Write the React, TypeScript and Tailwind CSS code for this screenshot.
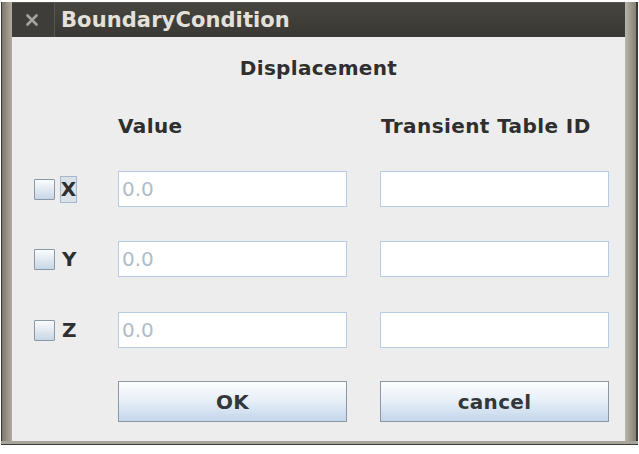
import React from "react";

// Displacement boundary condition dialog (Swing / GTK look)
const axes = [
  { name: "X", focused: true },
  { name: "Y", focused: false },
  { name: "Z", focused: false },
];

function CheckBox() {
  return (
    <span className="block h-[21px] w-[21px] rounded-[1px] border border-[#8a99aa] bg-gradient-to-b from-[#fbfcfd] to-[#c8d6e5]" />
  );
}

function Field({ value }: { value?: string }) {
  return (
    <div className="flex h-[36px] items-center border border-[#b5cce3] bg-white px-[3px] text-[20px] leading-none text-[#b0bcc9]">
      {value}
    </div>
  );
}

function Button({ label }: { label: string }) {
  return (
    <button className="flex h-[41px] items-center justify-center border border-[#8b97a4] bg-gradient-to-b from-[#fdfdfe] via-[#e6eef7] to-[#c3d6ea] text-[20px] font-bold tracking-[0.3px] text-[#34373a]">
      {label}
    </button>
  );
}

export default function App() {
  return (
    <div className="h-[454px] w-[639px] overflow-hidden bg-white font-['DejaVu_Sans',sans-serif]">
      <div className="ml-px mt-[2px] flex h-[443px] w-[637px] flex-col">
        <div className="flex flex-1">
          {/* left frame */}
          <div className="w-[11px] border-l border-[#3b3a36] bg-gradient-to-r from-[#7c766b] to-[#b2ada2]" />

          <div className="flex w-[613px] flex-col">
            {/* title bar */}
            <div className="flex h-[35px] items-center border-t border-[#55544f] bg-gradient-to-b from-[#46453f] to-[#393834]">
              <div className="flex h-full w-[43px] items-center justify-center border-r border-[#56554f] bg-[#3e3d39]">
                <svg width="12" height="12" viewBox="0 0 12 12" className="ml-[-2px]">
                  <path d="M1.5 1.5 L10.5 10.5 M10.5 1.5 L1.5 10.5" stroke="#a6a49f" strokeWidth="2.6" strokeLinecap="round" />
                </svg>
              </div>
              <span className="ml-[6px] text-[21px] font-bold leading-none tracking-[0.1px] text-[#e4e1da]">BoundaryCondition</span>
            </div>

            {/* dialog body */}
            <div className="flex-1 bg-[#ededed] pl-[22px] pt-[19px] text-[#2f2f2f]">
              <p className="pr-[22px] text-center text-[20px] font-bold leading-[24px] tracking-[0.3px]">Displacement</p>

              <div className="mt-[34px] grid grid-cols-[51px_229px_229px] gap-x-[33px] text-[20px] font-bold leading-[24px] tracking-[0.4px]">
                <span />
                <span>Value</span>
                <span className="pl-px">Transient Table ID</span>
              </div>

              {axes.map((a, i) => (
                <div
                  key={a.name}
                  className={
                    "grid grid-cols-[51px_229px_229px] items-center gap-x-[33px] " +
                    (i === 0 ? "mt-[33px]" : i === 1 ? "mt-[34px]" : "mt-[35px]")
                  }
                >
                  <div className="flex items-center gap-[5px]">
                    <CheckBox />
                    {a.focused ? (
                      <span className="flex h-[27px] w-[17px] items-center justify-center border border-[#a5b8cc] bg-[#d9e2eb] text-[20px] font-bold leading-none">
                        {a.name}
                      </span>
                    ) : (
                      <span className="pl-[2px] text-[20px] font-bold leading-none">{a.name}</span>
                    )}
                  </div>
                  <Field value="0.0" />
                  <Field />
                </div>
              ))}

              <div className="mt-[33px] grid grid-cols-[51px_229px_229px] gap-x-[33px]">
                <span />
                <Button label="OK" />
                <Button label="cancel" />
              </div>
            </div>
          </div>

          {/* right frame */}
          <div className="w-[13px] border-r-2 border-[#3b3a36] bg-gradient-to-l from-[#857f74] to-[#bab5aa]" />
        </div>
        {/* bottom frame */}
        <div className="h-[4px] border-b border-[#3b3a36] bg-[#a9a499]" />
      </div>
    </div>
  );
}
